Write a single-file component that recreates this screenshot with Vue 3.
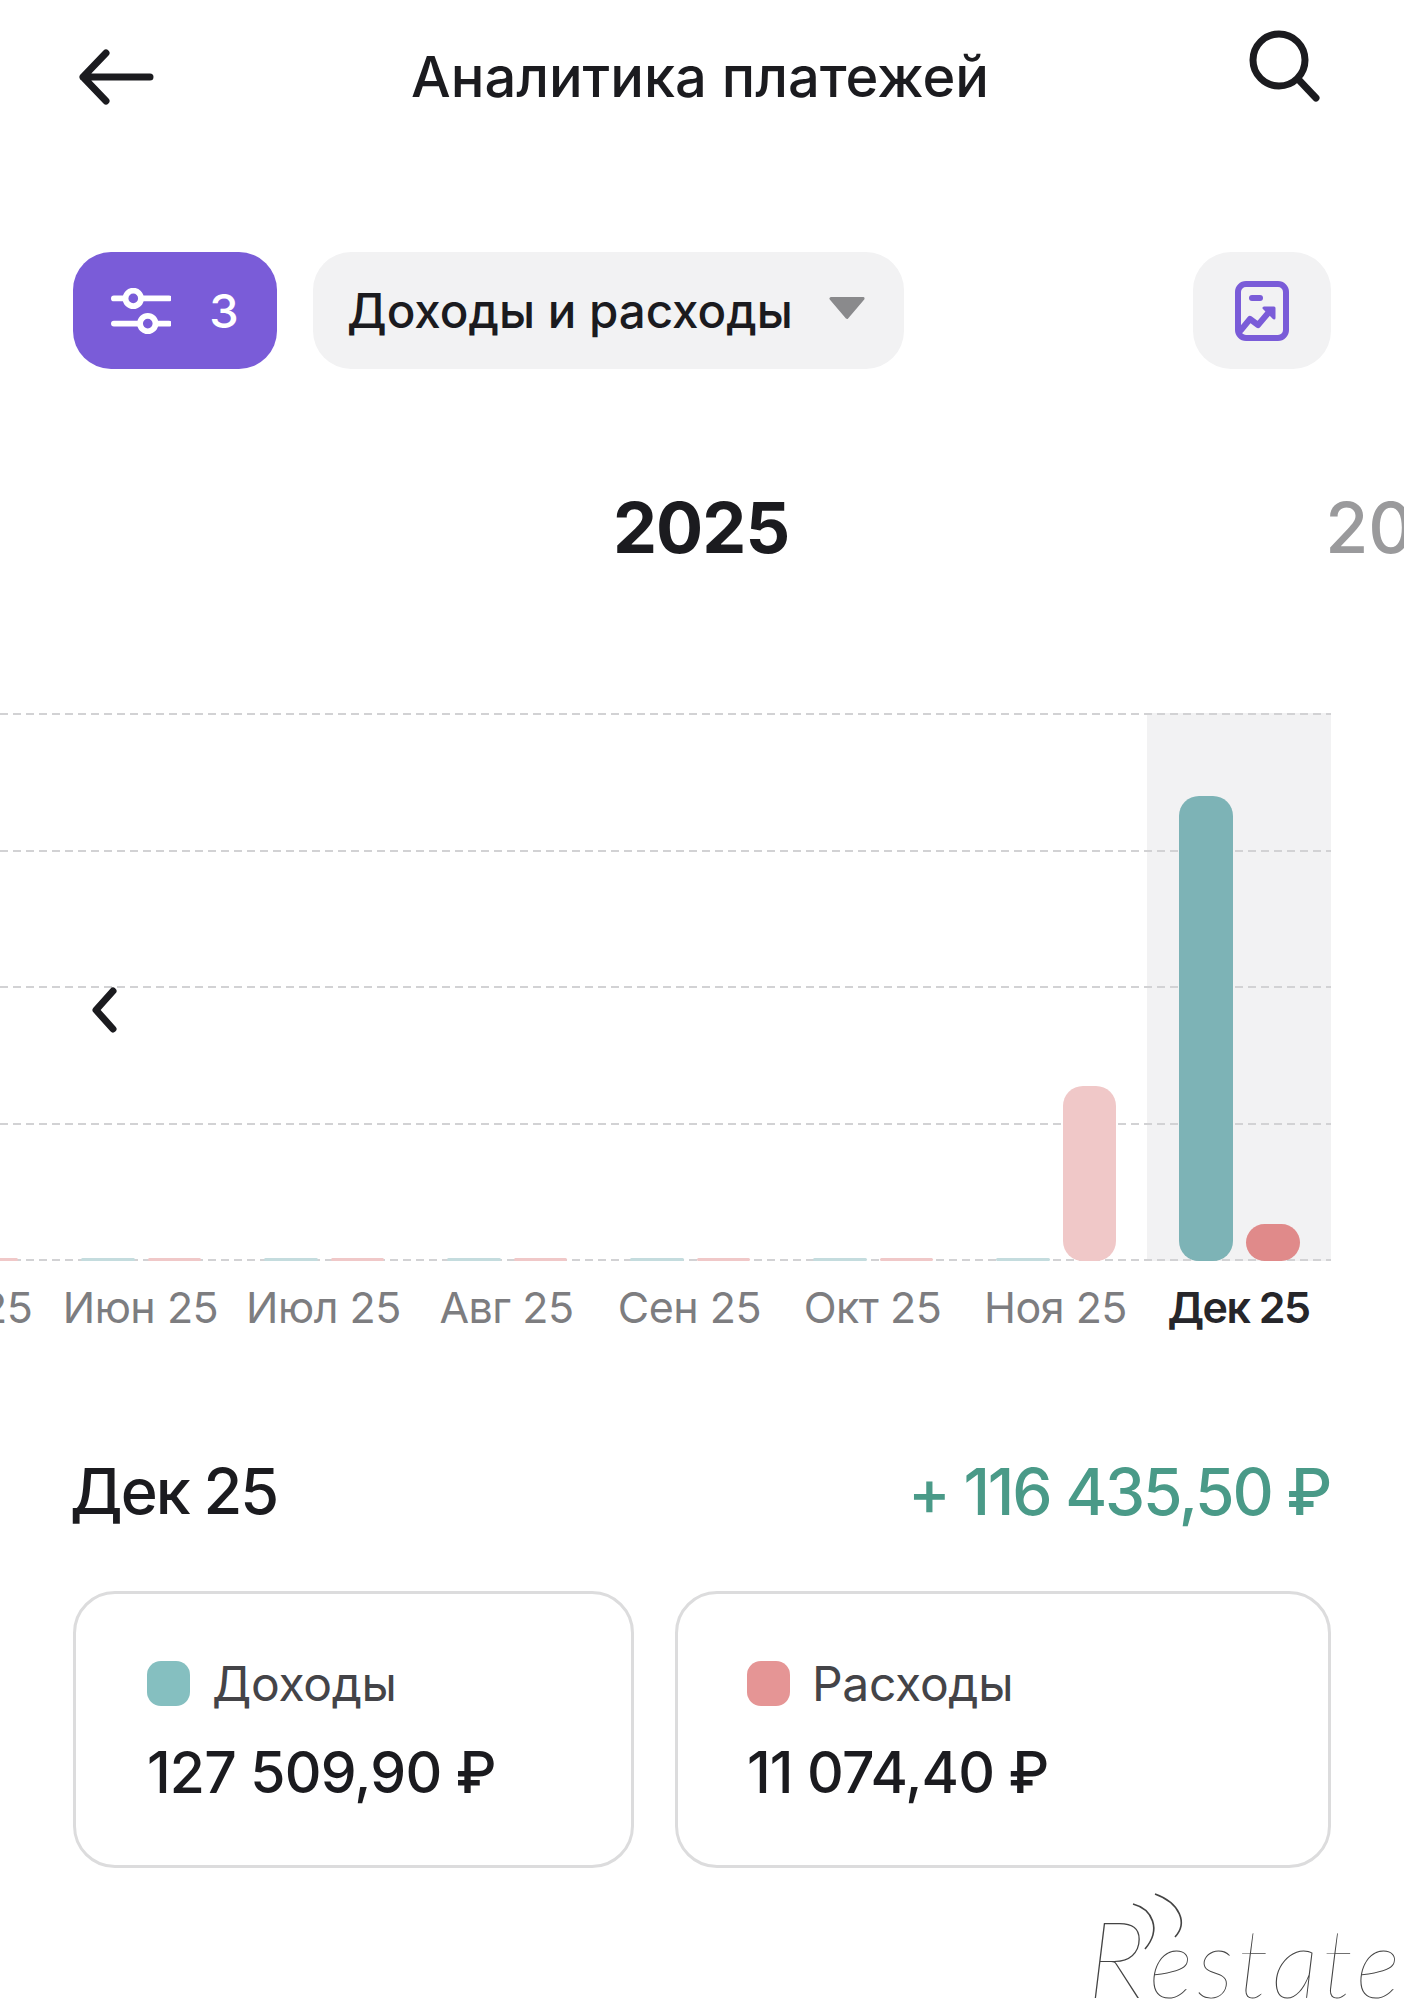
<script setup>
const months = [
  { label: 'Май 25', inc: 3, exp: 3 },
  { label: 'Июн 25', inc: 3, exp: 3 },
  { label: 'Июл 25', inc: 3, exp: 3 },
  { label: 'Авг 25', inc: 3, exp: 3 },
  { label: 'Сен 25', inc: 3, exp: 3 },
  { label: 'Окт 25', inc: 3, exp: 3 },
  { label: 'Ноя 25', inc: 3, exp: 175 },
  { label: 'Дек 25', inc: 465, exp: 37, active: true }
]
const gridLines = [0, 1, 2, 3, 4]
const cards = [
  { name: 'Доходы', value: '127 509,90 ₽', tone: 'teal' },
  { name: 'Расходы', value: '11 074,40 ₽', tone: 'red' }
]
</script>

<template>
  <div class="page">
    <header class="header">
      <svg class="back" width="80" height="64" viewBox="0 0 80 64" fill="none" stroke="#1b1b1f" stroke-width="7" stroke-linecap="round" stroke-linejoin="round">
        <path d="M7 32H74M30 8L7 32L30 56" />
      </svg>
      <h1 class="title">Аналитика платежей</h1>
      <svg class="search" width="74" height="74" viewBox="0 0 74 74" fill="none" stroke="#1b1b1f" stroke-width="7" stroke-linecap="round">
        <circle cx="31" cy="31" r="26" />
        <path d="M50 50L68 69" />
      </svg>
    </header>

    <section class="toolbar">
      <button class="filter">
        <svg width="60" height="46" viewBox="0 0 62 46" fill="none" stroke="#fff" stroke-width="6" stroke-linecap="round">
          <path d="M3 10H14M33 10H60M3 36H29M48 36H60" />
          <circle cx="23" cy="10" r="8" />
          <circle cx="38" cy="36" r="8" />
        </svg>
        <span>3</span>
      </button>
      <button class="select">
        <span>Доходы и расходы</span>
        <svg width="38" height="24" viewBox="0 0 40 24" fill="#8a8a8c" stroke="#8a8a8c" stroke-width="3" stroke-linejoin="round">
          <path d="M3 2H37L20 22Z" />
        </svg>
      </button>
      <button class="export">
        <svg width="54" height="60" viewBox="0 0 54 60" fill="none" stroke="#7a5cd8" stroke-width="6" stroke-linecap="round" stroke-linejoin="round">
          <rect x="3" y="3" width="48" height="54" rx="8" />
          <path d="M17 17H25" />
          <path d="M6 49L15 38L23 44L34 31" />
          <path d="M29 27H39V37Z" fill="#7a5cd8" stroke-width="3" />
        </svg>
      </button>
    </section>

    <div class="years">
      <span class="year current">2025</span>
      <span class="year next">2026</span>
    </div>

    <section class="chart">
      <div class="plot">
        <div class="grid">
          <i v-for="n in gridLines" :key="n"></i>
        </div>
        <div v-for="m in months" :key="m.label" class="col" :class="{ active: m.active }">
          <div class="bar inc" :class="{ faded: !m.active }" :style="{ height: m.inc + 'px' }"></div>
          <div class="bar exp" :class="{ faded: !m.active }" :style="{ height: m.exp + 'px' }"></div>
        </div>
        <svg class="chevron" width="28" height="50" viewBox="0 0 28 50" fill="none" stroke="#1b1b1f" stroke-width="7" stroke-linecap="round" stroke-linejoin="round">
          <path d="M23 6L6 25L23 44" />
        </svg>
      </div>
      <div class="labels">
        <span v-for="m in months" :key="m.label" :class="{ active: m.active }">{{ m.label }}</span>
      </div>
    </section>

    <section class="summary">
      <h2>Дек 25</h2>
      <strong>+ 116 435,50 ₽</strong>
    </section>

    <section class="cards">
      <article v-for="c in cards" :key="c.name" class="card">
        <div class="legend">
          <i class="dot" :class="c.tone"></i>
          <span>{{ c.name }}</span>
        </div>
        <div class="value">{{ c.value }}</div>
      </article>
    </section>

    <div class="mark">
      <svg class="arcs" width="70" height="70" viewBox="0 0 70 70" fill="none" stroke="#444" stroke-width="1.6">
        <path d="M13 17C32 22 42 42 25 62" />
        <path d="M35 7C60 16 68 36 55 50" />
      </svg>
      <span class="r">R</span><span class="rest">estate</span>
    </div>
  </div>
</template>

<style>
html, body { margin: 0; background: #fff; }
</style>

<style scoped>
.page {
  position: relative;
  width: 1404px;
  height: 2000px;
  overflow: hidden;
  background: #fff;
  color: #1b1b1f;
  font-family: Inter, "Noto Sans", sans-serif;
}
h1, h2 { margin: 0; font: inherit; }
button { border: 0; padding: 0; font: inherit; color: inherit; }

.header {
  display: flex;
  align-items: center;
  justify-content: space-between;
  height: 154px;
  padding: 0 80px 0 76px;
}
.search { margin-top: -22px; margin-right: 2px; }
.title {
  font-size: 56px;
  font-weight: 500;
  letter-spacing: 0;
  line-height: 60px;
  margin-left: -4px;
}

.toolbar {
  display: flex;
  align-items: stretch;
  height: 117px;
  margin-top: 98px;
  padding: 0 73px;
}
.filter {
  width: 204px;
  display: flex;
  align-items: center;
  justify-content: center;
  gap: 38px;
  border-radius: 38px;
  background: #7a5cd8;
  color: #fff;
  font-size: 47px;
  font-weight: 500;
}
.select {
  width: 591px;
  margin-left: 36px;
  display: flex;
  align-items: center;
  justify-content: space-between;
  padding: 0 38px 0 34px;
  border-radius: 38px;
  background: #f2f2f3;
  font-size: 47.5px;
  font-weight: 500;
}
.select svg { margin-top: -6px; }
.export {
  width: 138px;
  margin-left: auto;
  display: flex;
  align-items: center;
  justify-content: center;
  border-radius: 38px;
  background: #f2f2f3;
}

.years {
  display: flex;
  align-items: center;
  gap: 536px;
  height: 90px;
  margin-top: 114px;
  padding-left: 613px;
  white-space: nowrap;
}
.year { font-size: 70px; line-height: 90px; }
.current { font-weight: 700; letter-spacing: -1px; }
.next { font-weight: 500; color: #9a9a9c; }

.chart { margin-top: 140px; }
.plot {
  position: relative;
  display: flex;
  justify-content: flex-end;
  width: 1331px;
  height: 548px;
}
.grid {
  position: absolute;
  inset: 0;
  z-index: 1;
  display: flex;
  flex-direction: column;
  justify-content: space-between;
}
.grid i {
  display: block;
  height: 2px;
  background: repeating-linear-gradient(90deg, #d2d2d4 0 8px, transparent 8px 13px);
}
.col {
  flex: none;
  width: 183px;
  box-sizing: border-box;
  display: flex;
  align-items: flex-end;
  gap: 13px;
  padding: 0 31px 0 32px;
}
.col.active { width: 184px; background: #f2f2f3; }
.bar {
  position: relative;
  z-index: 2;
  flex: 1;
  border-radius: 20px;
}
.inc { background: #7db3b6; }
.exp { background: #e08a8a; }
.inc.faded { background: #c4dcde; }
.exp.faded { background: #f0c8c8; }

.chevron {
  position: absolute;
  left: 90px;
  top: 272px;
  z-index: 3;
}

.labels {
  display: flex;
  justify-content: flex-end;
  width: 1330px;
  margin-top: 21px;
  font-size: 43px;
  line-height: 50px;
  color: #7d7d80;
  white-space: nowrap;
}
.labels span {
  flex: none;
  width: 183px;
  text-align: center;
  letter-spacing: -0.5px;
}
.labels .active { color: #26262a; font-weight: 600; letter-spacing: -1.5px; }

.summary {
  display: flex;
  align-items: center;
  justify-content: space-between;
  height: 80px;
  margin-top: 119px;
  padding: 0 74px 0 70px;
  font-size: 63px;
  white-space: nowrap;
}
.summary h2 { font-weight: 500; letter-spacing: -2px; }
.summary strong { font-size: 64px; font-weight: 500; color: #4a9a88; letter-spacing: -2.2px; }

.cards {
  display: flex;
  gap: 41px;
  margin-top: 60px;
  padding: 0 73px 0 73px;
}
.card {
  box-sizing: border-box;
  height: 277px;
  padding: 66px 0 0 71px;
  border: 3px solid #dcdcdd;
  border-radius: 42px;
}
.card:first-child { width: 561px; }
.card:last-child { width: 656px; padding-left: 69px; }
.legend {
  display: flex;
  align-items: center;
  gap: 22px;
  height: 46px;
  font-size: 48px;
  color: #444448;
  letter-spacing: -0.3px;
}
.dot {
  display: block;
  width: 43px;
  height: 45px;
  border-radius: 14px;
}
.dot.teal { background: #85bfc0; }
.dot.red { background: #e59595; }
.value {
  margin-top: 35px;
  font-size: 57px;
  font-weight: 500;
  line-height: 64px;
  letter-spacing: -0.8px;
  white-space: nowrap;
}

.mark {
  position: absolute;
  left: 1087px;
  bottom: -10px;
  display: flex;
  align-items: baseline;
  font-family: Lato, "Liberation Sans", sans-serif;
  font-style: italic;
  font-weight: 100;
  color: #444;
  line-height: 1;
  white-space: nowrap;
}
.r { font-size: 106px; }
.rest { font-size: 96px; margin-left: 4px; letter-spacing: 3.5px; }
.arcs {
  position: absolute;
  left: 33px;
  top: -17px;
}
</style>
